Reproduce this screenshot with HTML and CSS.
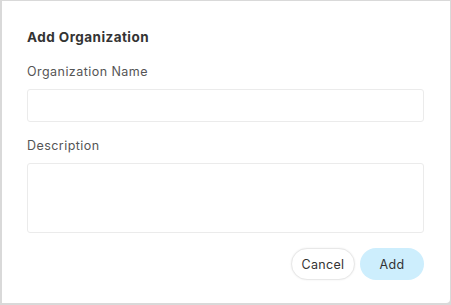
FILE: index.html
```html
<!DOCTYPE html>
<html lang="en">
<head>
    <meta charset="UTF-8">
    <meta name="viewport" content="width=device-width, initial-scale=1.0">
    <title>Add Organization</title>
    <link rel="stylesheet" href="styles.css">
</head>
<body>
    <div class="modal">
        <h1>Add Organization</h1>
        <form class="org-form">
            <label class="field">
                <span class="field-label">Organization Name</span>
                <input type="text" class="field-input">
            </label>
            <label class="field">
                <span class="field-label">Description</span>
                <textarea class="field-input field-area"></textarea>
            </label>
            <div class="actions">
                <button type="button" class="btn btn-cancel">Cancel</button>
                <button type="submit" class="btn btn-add">Add</button>
            </div>
        </form>
    </div>
</body>
</html>
```

FILE: styles.css
```css
* {
    margin: 0;
    padding: 0;
    box-sizing: border-box;
    font-family: Inter, 'Noto Sans', sans-serif;
}

html, body {
    height: 100%;
}

body {
    background: #d9d9d9;
    padding: 1px 1px 2px 2px;
}

.modal {
    background: #ffffff;
    height: 100%;
    border-radius: 0 0 4px 0;
    padding: 27px 26px 0 25px;
}

h1 {
    font-size: 13.5px;
    font-weight: 700;
    letter-spacing: 0.45px;
    line-height: 18px;
    color: #333333;
    margin-bottom: 18px;
}

.org-form {
    display: flex;
    flex-direction: column;
}

.field {
    display: flex;
    flex-direction: column;
    gap: 9px;
    margin-bottom: 16px;
}

.field-label {
    font-size: 12.5px;
    letter-spacing: 0.45px;
    line-height: 16px;
    color: #555555;
}

.field-input {
    width: 100%;
    height: 33px;
    border: 1px solid #ebebeb;
    border-radius: 3px;
    outline: none;
    background: #ffffff;
    resize: none;
}

.field-area {
    height: 70px;
}

.actions {
    display: flex;
    justify-content: flex-end;
    gap: 5px;
    margin-top: -1px;
}

.btn {
    height: 32px;
    width: 64px;
    border-radius: 16px;
    font-size: 12.5px;
    letter-spacing: 0.3px;
    color: #333333;
    cursor: pointer;
}

.btn-cancel {
    background: #ffffff;
    border: 1px solid #e8e8e8;
    box-shadow: 0 0 2px rgba(0, 0, 0, 0.08);
}

.btn-add {
    background: #cdeefd;
    border: none;
}
```
